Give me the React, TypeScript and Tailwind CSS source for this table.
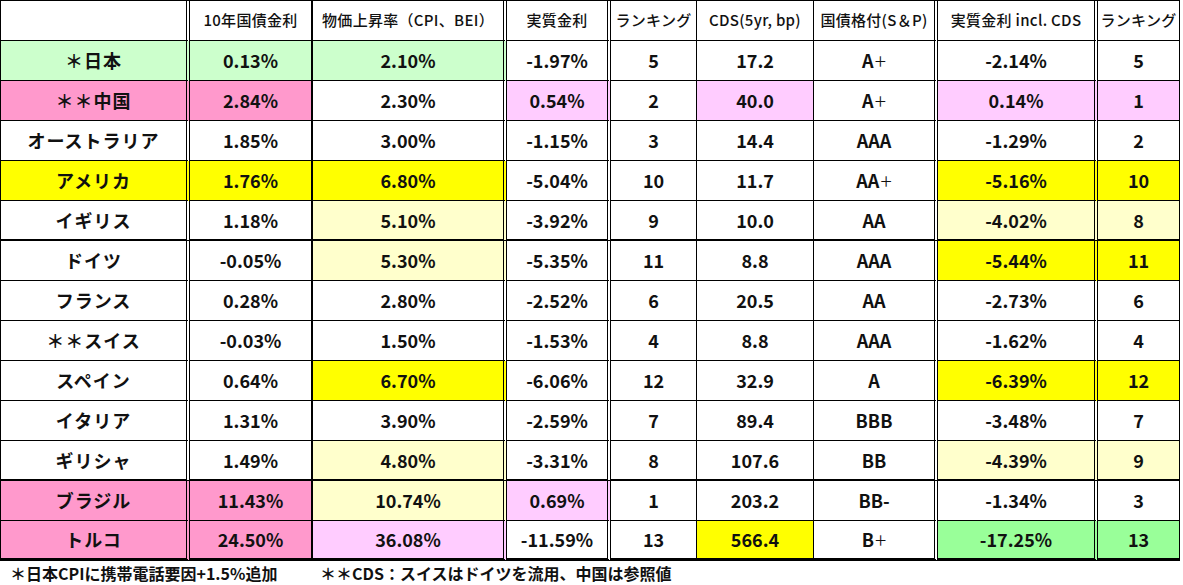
const G = "bg-[#ccffcc]"
const P = "bg-[#ff99cc]"
const L = "bg-[#ffccff]"
const Y = "bg-[#ffff00]"
const LY = "bg-[#ffffcc]"
const GG = "bg-[#99ff99]"
const W = "bg-white"

type Cell = [string, string]
type Row = { name: string; bg: string; cells: Cell[] }

const headers = [
  "",
  "10年国債金利",
  "物価上昇率（CPI、BEI）",
  "実質金利",
  "ランキング",
  "CDS(5yr, bp)",
  "国債格付(S＆P)",
  "実質金利 incl. CDS",
  "ランキング",
]

// right border per column: double lines split the groups
const colBorder = [
  "border-r-4 [border-right-style:double]",
  "border-r-2",
  "border-r-4 [border-right-style:double]",
  "border-r-4 [border-right-style:double]",
  "border-r",
  "border-r",
  "border-r-4 [border-right-style:double]",
  "border-r-4 [border-right-style:double]",
  "border-r",
]

const rows: Row[] = [
  { name: "＊日本", bg: G, cells: [["0.13%", G], ["2.10%", G], ["-1.97%", W], ["5", W], ["17.2", W], ["A+", W], ["-2.14%", W], ["5", W]] },
  { name: "＊＊中国", bg: P, cells: [["2.84%", P], ["2.30%", W], ["0.54%", L], ["2", W], ["40.0", L], ["A+", W], ["0.14%", L], ["1", L]] },
  { name: "オーストラリア", bg: W, cells: [["1.85%", W], ["3.00%", W], ["-1.15%", W], ["3", W], ["14.4", W], ["AAA", W], ["-1.29%", W], ["2", W]] },
  { name: "アメリカ", bg: Y, cells: [["1.76%", Y], ["6.80%", Y], ["-5.04%", W], ["10", W], ["11.7", W], ["AA+", W], ["-5.16%", Y], ["10", Y]] },
  { name: "イギリス", bg: W, cells: [["1.18%", W], ["5.10%", LY], ["-3.92%", W], ["9", W], ["10.0", W], ["AA", W], ["-4.02%", LY], ["8", LY]] },
  { name: "ドイツ", bg: W, cells: [["-0.05%", W], ["5.30%", LY], ["-5.35%", W], ["11", W], ["8.8", W], ["AAA", W], ["-5.44%", Y], ["11", Y]] },
  { name: "フランス", bg: W, cells: [["0.28%", W], ["2.80%", W], ["-2.52%", W], ["6", W], ["20.5", W], ["AA", W], ["-2.73%", W], ["6", W]] },
  { name: "＊＊スイス", bg: W, cells: [["-0.03%", W], ["1.50%", W], ["-1.53%", W], ["4", W], ["8.8", W], ["AAA", W], ["-1.62%", W], ["4", W]] },
  { name: "スペイン", bg: W, cells: [["0.64%", W], ["6.70%", Y], ["-6.06%", W], ["12", W], ["32.9", W], ["A", W], ["-6.39%", Y], ["12", Y]] },
  { name: "イタリア", bg: W, cells: [["1.31%", W], ["3.90%", W], ["-2.59%", W], ["7", W], ["89.4", W], ["BBB", W], ["-3.48%", W], ["7", W]] },
  { name: "ギリシャ", bg: W, cells: [["1.49%", W], ["4.80%", LY], ["-3.31%", W], ["8", W], ["107.6", W], ["BB", W], ["-4.39%", LY], ["9", LY]] },
  { name: "ブラジル", bg: P, cells: [["11.43%", P], ["10.74%", LY], ["0.69%", L], ["1", W], ["203.2", W], ["BB-", W], ["-1.34%", W], ["3", W]] },
  { name: "トルコ", bg: P, cells: [["24.50%", P], ["36.08%", L], ["-11.59%", W], ["13", W], ["566.4", Y], ["B+", W], ["-17.25%", GG], ["13", GG]] },
]

function rowBorder(i: number) {
  if (i === rows.length - 1) return "border-b-[3px]"
  if (i === 4 || i === 10) return "border-b-2"
  return "border-b"
}

// the plus sign in the ratings is drawn large and thin in the sheet
function CellText({ value }: { value: string }) {
  if (value.endsWith("+")) {
    return (
      <>
        {value.slice(0, -1)}
        <span className="ml-[1px] text-[21px] leading-none font-light">+</span>
      </>
    )
  }
  return <>{value}</>
}

export default function App() {
  return (
    <div className="h-[585px] w-[1183px] overflow-hidden bg-white font-['Noto_Sans_CJK_JP',sans-serif] text-[#111]">
      <div className="grid w-fit grid-cols-[189px_123px_194px_104px_86px_117px_124px_160px_82px] border-t border-l border-black">
        {headers.map((h, c) => (
          <div
            key={c}
            className={`flex h-10 items-center justify-center border-b border-black bg-white text-[15px] font-medium tracking-[0.3px] whitespace-nowrap ${colBorder[c]}`}
          >
            {h}
          </div>
        ))}

        {rows.map((row, r) => (
          <div key={row.name} className="contents">
            <div
              className={`flex h-10 items-center justify-center border-black text-[18px] font-bold tracking-[1px] ${row.bg} ${colBorder[0]} ${rowBorder(r)}`}
            >
              {row.name}
            </div>
            {row.cells.map(([v, bg], c) => (
              <div
                key={c}
                className={`flex h-10 items-center justify-center border-black text-[18px] font-bold ${bg} ${colBorder[c + 1]} ${rowBorder(r)}`}
              >
                <CellText value={v} />
              </div>
            ))}
          </div>
        ))}
      </div>

      <div className="flex pt-[2px] pl-[10px] text-[16px] leading-5 font-semibold">
        <span className="w-[310px]">＊日本CPIに携帯電話要因+1.5%追加</span>
        <span>＊＊CDS：スイスはドイツを流用、中国は参照値</span>
      </div>
    </div>
  )
}
